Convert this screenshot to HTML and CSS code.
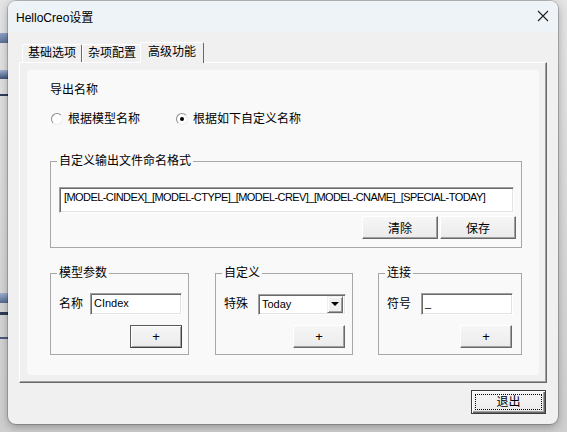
FILE: index.html
```html
<!DOCTYPE html>
<html lang="zh-CN">

<head>
  <meta charset="UTF-8">
  <meta name="viewport" content="width=device-width, initial-scale=1.0">
  <title>HelloCreo设置</title>
  <link rel="stylesheet" href="styles.css">
</head>

<body>
  <div class="window">
    <div class="titlebar">
      <span class="title">HelloCreo设置</span>
      <svg class="close" width="12" height="12" viewBox="0 0 12 12">
        <path d="M1 1L11 11M11 1L1 11" stroke="#1f1f1f" stroke-width="1.1" fill="none" />
      </svg>
    </div>

    <div class="client">
      <div class="tabs">
        <div class="tab">基础选项</div>
        <div class="tab">杂项配置</div>
        <div class="tab active">高级功能</div>
      </div>

      <div class="panel">
        <div class="page">
          <div class="heading">导出名称</div>
          <div class="radios">
            <div class="radio"><span class="dot"></span>根据模型名称</div>
            <div class="radio checked"><span class="dot"></span>根据如下自定义名称</div>
          </div>

          <fieldset class="group wide">
            <legend>自定义输出文件命名格式</legend>
            <div class="edit pattern">[MODEL-CINDEX]_[MODEL-CTYPE]_[MODEL-CREV]_[MODEL-CNAME]_[SPECIAL-TODAY]</div>
            <div class="btnRow">
              <button class="btn">清除</button>
              <button class="btn">保存</button>
            </div>
          </fieldset>

          <div class="groups">
            <fieldset class="group model">
              <legend>模型参数</legend>
              <div class="field">
                <span class="label">名称</span>
                <div class="edit small">CIndex</div>
              </div>
              <div class="btnRow">
                <button class="btn plus focused">+</button>
              </div>
            </fieldset>

            <fieldset class="group custom">
              <legend>自定义</legend>
              <div class="field">
                <span class="label">特殊</span>
                <div class="combo">
                  <span class="comboText">Today</span>
                  <span class="comboBtn"><span class="arrow"></span></span>
                </div>
              </div>
              <div class="btnRow">
                <button class="btn plus">+</button>
              </div>
            </fieldset>

            <fieldset class="group link">
              <legend>连接</legend>
              <div class="field">
                <span class="label">符号</span>
                <div class="edit small">_</div>
              </div>
              <div class="btnRow">
                <button class="btn plus">+</button>
              </div>
            </fieldset>
          </div>
        </div>
      </div>

      <div class="footer">
        <button class="btn exit"><span class="focusRect">退出</span></button>
      </div>
    </div>
  </div>
</body>

</html>
```

FILE: styles.css
```css
* {
  box-sizing: border-box;
}
body {
  margin: 0;
  height: 432px;
  overflow: hidden;
  font-family: "Liberation Sans", "Noto Sans CJK SC", sans-serif;
  font-size: 12px;
  color: #000;
  background:
    linear-gradient(#8ea3c9, #5c6f96) 0 33px / 8px 10px no-repeat,
    linear-gradient(#9fb2d4, #3f5078) 0 70px / 8px 9px no-repeat,
    linear-gradient(#2f3b58, #2f3b58) 0 94px / 8px 2px no-repeat,
    linear-gradient(#9fb2d4, #55688f) 0 293px / 8px 10px no-repeat,
    linear-gradient(#2f3b58, #2f3b58) 0 312px / 8px 3px no-repeat,
    linear-gradient(#4a5b80, #4a5b80) 0 337px / 8px 2px no-repeat,
    linear-gradient(#e4e4e4, #cfcfcf);
}
.window {
  margin: 1px 0 0 8px;
  width: 550px;
  height: 423px;
  border-radius: 8px;
  background: #f0f0f0;
  overflow: hidden;
  box-shadow: 0 0 0 1px rgba(0, 0, 0, 0.18), 0 3px 10px rgba(0, 0, 0, 0.3);
}

/* title bar */
.titlebar {
  display: flex;
  align-items: center;
  justify-content: space-between;
  height: 31px;
  padding: 0 9px 1px 8px;
  background: #eef3f8;
}
.title {
  font-size: 12px;
}

/* tabs */
.client {
  padding: 10px 11px 0;
}
.tabs {
  display: flex;
  align-items: flex-end;
  height: 20px;
  padding-left: 3px;
}
.tab {
  height: 18px;
  padding: 0 5px;
  line-height: 17px;
  border: 1px solid;
  border-color: #fff #696969 transparent #fff;
  border-bottom: 0;
  border-radius: 2px 2px 0 0;
  background: #f0f0f0;
}
.tab.active {
  position: relative;
  z-index: 1;
  height: 21px;
  margin: 0 -2px -1px;
  padding: 0 7px;
  line-height: 19px;
}
.panel {
  width: 528px;
  height: 321px;
  padding: 7px;
  border: 1px solid;
  border-color: #fff #696969 #696969 #fff;
  box-shadow: inset -1px -1px 0 #a0a0a0;
}
.page {
  height: 305px;
  padding: 12px 0 0 23px;
  border-radius: 4px;
  background: #f9f9f9;
}
.heading {
  line-height: 16px;
}

/* radios */
.radios {
  display: flex;
  margin-top: 13px;
  padding-left: 1px;
  line-height: 16px;
}
.radio {
  display: flex;
  align-items: center;
  gap: 5px;
  width: 125px;
}
.dot {
  display: flex;
  align-items: center;
  justify-content: center;
  width: 12px;
  height: 12px;
  border: 1px solid;
  border-color: #8c8c8c #ececec #ececec #8c8c8c;
  border-radius: 50%;
  background: #fff;
}
.radio.checked .dot::after {
  content: "";
  width: 4px;
  height: 4px;
  border-radius: 50%;
  background: #000;
}

/* group boxes */
.group {
  margin: 0;
  min-width: 0;
  border: 1px solid #a7a7a7;
}
.group legend {
  margin-left: -2px;
  padding: 0 2px;
  line-height: 16px;
}
.group.wide {
  width: 472px;
  margin-top: 26px;
  padding: 0 5px 8px 8px;
}
.edit {
  background: #fff;
  border: 1px solid;
  border-color: #a0a0a0 #fff #fff #a0a0a0;
  box-shadow: inset 1px 1px 0 #696969, inset -1px -1px 0 #e3e3e3;
  font-family: "Liberation Sans", sans-serif;
  font-size: 11px;
}
.pattern {
  width: 455px;
  height: 26px;
  margin-top: 18px;
  padding: 3px 0 0 4px;
  letter-spacing: -0.57px;
  white-space: nowrap;
  overflow: hidden;
}
.btnRow {
  display: flex;
  justify-content: flex-end;
  gap: 2px;
  margin-top: 3px;
}
.btn {
  height: 23px;
  padding: 0;
  font: inherit;
  color: #000;
  background: linear-gradient(#f6f6f6, #ebebeb);
  border: 1px solid;
  border-color: #fff #696969 #696969 #fff;
  box-shadow: inset -1px -1px 0 #a0a0a0;
}
.group.wide .btn {
  width: 76px;
}

.groups {
  display: flex;
  margin-top: 17px;
}
.groups .group {
  padding: 0 6px 6px 8px;
}
.group.model {
  width: 139px;
}
.group.custom {
  width: 138px;
  margin-left: 26px;
  padding-right: 7px;
}
.group.link {
  width: 144px;
  margin-left: 25px;
  padding-right: 9px;
}
.field {
  display: flex;
  align-items: center;
  gap: 10px;
  margin-top: 12px;
  height: 22px;
}
.group.model .field {
  gap: 7px;
}
.label {
  flex: none;
  width: 24px;
  line-height: 16px;
  white-space: nowrap;
}
.edit.small {
  flex: none;
  width: 92px;
  height: 22px;
  padding: 1px 0 0 3px;
  line-height: 17px;
}
.groups .btnRow {
  margin-top: 10px;
}
.btn.plus {
  width: 52px;
  font-family: "Liberation Sans", sans-serif;
  font-size: 13px;
}
.btn.focused {
  border-color: #5a5a5a #404040 #404040 #5a5a5a;
  box-shadow: inset 1px 1px 0 #fff, inset -1px -1px 0 #a0a0a0;
}

/* combo */
.combo {
  flex: none;
  display: flex;
  align-items: center;
  width: 88px;
  height: 21px;
  padding: 2px 2px 2px 3px;
  background: #fff;
  border: 1px solid;
  border-color: #a0a0a0 #fff #fff #a0a0a0;
  box-shadow: inset 1px 1px 0 #696969, inset -1px -1px 0 #e3e3e3;
  font-family: "Liberation Sans", sans-serif;
  font-size: 11px;
}
.comboText {
  flex: 1;
}
.comboBtn {
  display: flex;
  align-items: center;
  justify-content: center;
  width: 16px;
  height: 17px;
  background: #f0f0f0;
  border: 1px solid;
  border-color: #f0f0f0 #696969 #696969 #f0f0f0;
  box-shadow: inset 1px 1px 0 #fff, inset -1px -1px 0 #a0a0a0;
}
.arrow {
  width: 0;
  height: 0;
  border-left: 4px solid transparent;
  border-right: 4px solid transparent;
  border-top: 4px solid #000;
}

/* footer */
.footer {
  display: flex;
  justify-content: flex-end;
  padding: 7px 1px 0 0;
}
.btn.exit {
  width: 75px;
  height: 24px;
  padding: 3px;
  border: 1px solid #3c3c3c;
  box-shadow: inset 1px 1px 0 #fff, inset -1px -1px 0 #696969, inset -2px -2px 0 #a0a0a0;
}
.focusRect {
  display: block;
  height: 100%;
  line-height: 14px;
  border: 1px dotted #000;
}
```
